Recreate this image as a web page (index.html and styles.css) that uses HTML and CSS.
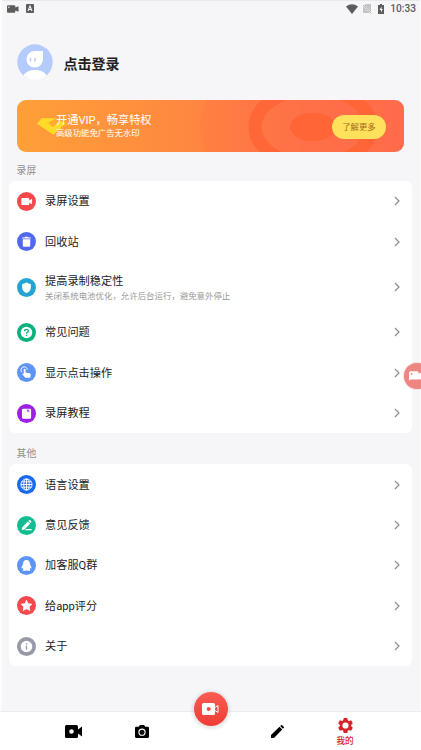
FILE: index.html
```
<!DOCTYPE html>
<html lang="zh-CN">
<head>
<meta charset="utf-8">
<title>我的</title>
<link rel="stylesheet" href="styles.css">
</head>
<body>
<svg class="defs" width="0" height="0">
  <symbol id="chev" viewBox="0 0 6 10"><path d="M1 1l4 4-4 4" fill="none" stroke="#8c8c8c" stroke-width="1.2"/></symbol>
</svg>
<div class="screen">
  <header class="status">
    <svg class="s-cam" viewBox="0 0 13 8"><path d="M1 0h7q1 0 1 1v1.500L12.500 1v6L9 5.500V7q0 1-1 1H1Q0 8 0 7V1q0-1 1-1z" fill="#5c5c5c"/><circle cx="2" cy="2" r=".8" fill="#f6f6f9"/></svg>
    <svg class="s-a" viewBox="0 0 8 9"><rect width="8" height="9" rx="1" fill="#5c5c5c"/><path d="M2 7l2-5 2 5M2.700 5.500h2.600" fill="none" stroke="#f6f6f9" stroke-width="1.100"/></svg>
    <span class="grow"></span>
    <svg class="s-wifi" viewBox="0 0 12 10"><path d="M0 2.500Q6-2 12 2.500L6 10z" fill="#5c5c5c"/></svg>
    <svg class="s-sim" viewBox="0 0 9 10"><path d="M3 0h5v8L1 1zM0 2l7 7H0z" fill="#c4c4c7"/><path d="M0 1l8.500 8.500" stroke="#aaa" stroke-width=".8"/></svg>
    <svg class="s-bat" viewBox="0 0 6 10"><path d="M2 0h2v1h2v9H0V1h2z" fill="#5c5c5c"/><path d="M3.500 2.500L1.500 6H3v2.500L4.700 5H3.500z" fill="#fff"/></svg>
    <span class="clock">10:33</span>
  </header>

  <section class="profile">
    <svg class="avatar" viewBox="0 0 36 36"><circle cx="18" cy="18" r="17.700" fill="#b3cbfd"/><path d="M18 7h8v8a8.300 8.300 0 1 1-8-8z" fill="#fff"/><path d="M6.500 31.500C8 28 13 26 18 26s10 2 11.500 5.500Q18 40.500 6.500 31.500z" fill="#fff"/><path d="M13.500 14v3.500M18 14v3.500" stroke="#b3cbfd" stroke-width="1.500"/></svg>
    <h1>点击登录</h1>
  </section>

  <section class="vip">
    <svg class="rings" viewBox="0 0 387 52"><ellipse cx="296" cy="27" rx="113" ry="76" fill="#ff6848" fill-opacity=".18"/><ellipse cx="296" cy="27" rx="58" ry="38" fill="none" stroke="#ff6130" stroke-width="13" stroke-opacity=".7"/><ellipse cx="296" cy="27" rx="23" ry="14" fill="#ff6535"/></svg>
    <svg class="gem" viewBox="0 0 35 20"><path d="M5 1h25l5 6-17 12L0 7z" fill="#ffba29" fill-opacity=".5"/><path d="M5 1h16l-9 5 5 4.500L27 4l3 3-12 12L0 7z" fill="#ffdc27"/></svg>
    <div class="vip-text"><div class="vip-title">开通VIP，畅享特权</div><div class="vip-sub">高级功能免广告无水印</div></div>
    <button class="more">了解更多</button>
  </section>

  <h2>录屏</h2>
  <section class="card">
    <div class="row"><svg class="ic" viewBox="0 0 24 24"><circle cx="12" cy="12" r="12" fill="#f7484c"/><path d="M7 7.500h7q1.500 0 1.500 1.500v1.700L19 8.500v7l-3.500-2V15q0 1.500-1.500 1.500H7Q5.500 16.500 5.500 15V9Q5.500 7.500 7 7.500z" fill="#fff"/></svg><div class="label">录屏设置</div><svg class="chev"><use href="#chev"/></svg></div>
    <div class="row"><svg class="ic" viewBox="0 0 24 24"><circle cx="12" cy="12" r="12" fill="#5069ee"/><path d="M6.500 6.800H9.500L10 6h4l.5.800h3v1.500h-11zM7.300 9h9.400v8q0 1.500-1.500 1.500H8.800Q7.300 18.500 7.300 17z" fill="#fff"/></svg><div class="label">回收站</div><svg class="chev"><use href="#chev"/></svg></div>
    <div class="row tall"><svg class="ic" viewBox="0 0 24 24"><circle cx="12" cy="12" r="12" fill="#24a4d5"/><path d="M12 5.500c2 1.600 3.500 1.800 5.500 2v4.500c0 3.500-2.500 5.800-5.500 7-3-1.200-5.500-3.500-5.500-7V7.500c2-.2 3.500-.4 5.500-2z" fill="#fff"/></svg><div class="label">提高录制稳定性<div class="note">关闭系统电池优化，允许后台运行，避免意外停止</div></div><svg class="chev"><use href="#chev"/></svg></div>
    <div class="row"><svg class="ic" viewBox="0 0 24 24"><circle cx="12" cy="12" r="12" fill="#0bb07f"/><circle cx="12" cy="12" r="7.300" fill="#fff"/><path d="M9.600 10.300q0-2.300 2.400-2.300t2.400 2.100c0 1.500-2.400 1.700-2.400 3.500M12 14.700v1.700" fill="none" stroke="#0bb07f" stroke-width="1.700"/></svg><div class="label">常见问题</div><svg class="chev"><use href="#chev"/></svg></div>
    <div class="row"><svg class="ic" viewBox="0 0 24 24"><circle cx="12" cy="12" r="12" fill="#5d94f5"/><path d="M6 11.500a4 4 0 1 1 7-3" fill="none" stroke="#fff" stroke-width="1.200"/><path d="M8.500 8q1.300-1.200 2.300 0v4l5.200 1q1.500.4 1.300 2l-.6 3.500H10.500L6.500 14q1-1.300 2 0z" fill="#fff"/></svg><div class="label">显示点击操作</div><svg class="chev"><use href="#chev"/></svg></div>
    <div class="row"><svg class="ic" viewBox="0 0 24 24"><circle cx="12" cy="12" r="12" fill="#9d20e5"/><rect x="6.300" y="6" width="11.500" height="12.500" rx="1.500" fill="#fff"/><path d="M12.500 7h3v3.500L14 9.500l-1.500 1z" fill="#9d20e5" fill-opacity=".7"/></svg><div class="label">录屏教程</div><svg class="chev"><use href="#chev"/></svg></div>
  </section>

  <h2 class="other">其他</h2>
  <section class="card">
    <div class="row"><svg class="ic" viewBox="0 0 24 24"><circle cx="12" cy="12" r="12" fill="#1769ed"/><g fill="none" stroke="#fff" stroke-width="1.200"><circle cx="12" cy="12" r="7"/><ellipse cx="12" cy="12" rx="3.500" ry="7"/><path d="M5 12h14M6 8.700h12M6 15.300h12M12 5v14"/></g></svg><div class="label">语言设置</div><svg class="chev"><use href="#chev"/></svg></div>
    <div class="row"><svg class="ic" viewBox="0 0 24 24"><circle cx="12" cy="12" r="12" fill="#13bd91"/><path d="M6.500 14.500l7-7.500 3 2.800-7 7.200-3.500.6zM14.300 6.200l1-.9q.8-.5 1.600.2l1 1q.7.800 0 1.600l-.8.800zM11.500 16.500h7V18h-8.500z" fill="#fff"/></svg><div class="label">意见反馈</div><svg class="chev"><use href="#chev"/></svg></div>
    <div class="row"><svg class="ic" viewBox="0 0 24 24"><circle cx="12" cy="12" r="12" fill="#5b93f6"/><path d="M12 5c3 0 4.300 2 4.300 4.500 0 1.500 2 3.500 2 5.500 0 1.200-.8 1-1.500.3l-.9 1.500q1.200.7.800 1.700H13L12 18l-1 .5H7.300q-.4-1 .8-1.700l-.9-1.500c-.7.700-1.500.900-1.500-.3 0-2 2-4 2-5.500C7.700 7 9 5 12 5z" fill="#fff"/></svg><div class="label">加客服Q群</div><svg class="chev"><use href="#chev"/></svg></div>
    <div class="row"><svg class="ic" viewBox="0 0 24 24"><circle cx="12" cy="12" r="12" fill="#f4494d"/><path d="M12 5.500l2 4.300 4.700.6-3.400 3.200.8 4.600-4.100-2.200-4.100 2.200.8-4.600-3.400-3.200 4.700-.6z" fill="#fff" stroke="#fff" stroke-linejoin="round"/></svg><div class="label">给app评分</div><svg class="chev"><use href="#chev"/></svg></div>
    <div class="row"><svg class="ic" viewBox="0 0 24 24"><circle cx="12" cy="12" r="12" fill="#9699a6"/><circle cx="12" cy="12" r="7.300" fill="#fff"/><path d="M12 8v1.500M12 10.700V16" stroke="#9699a6" stroke-width="1.600"/></svg><div class="label">关于</div><svg class="chev"><use href="#chev"/></svg></div>
  </section>

  <nav class="tabs">
    <div class="tab"><svg class="t-video" viewBox="0 0 17 13"><path fill-rule="evenodd" d="M1.500 0h10Q13 0 13 1.500v3L17 1.500v10L13 8.500v3q0 1.500-1.500 1.500h-10Q0 13 0 11.500v-10Q0 0 1.500 0zM6.500 4.200a2.300 2.300 0 1 0 0 4.600 2.300 2.300 0 0 0 0-4.600z"/></svg></div>
    <div class="tab"><svg class="t-photo" viewBox="0 0 14 13"><path d="M5 0h4l1.300 1.700H12.700Q14 1.700 14 3v8.500Q14 13 12.500 13h-11Q0 13 0 11.500V3q0-1.300 1.300-1.300h2.400z"/><circle cx="7" cy="7.200" r="3.100" fill="#111" stroke="#fff" stroke-width="1.100"/></svg></div>
    <div class="tab"></div>
    <div class="tab"><svg class="t-pen" viewBox="0 0 13 13"><path d="M0 13v-3L8.500 1.800l2.700 2.700L3 13zM9.200 1.100l.8-.8q.6-.6 1.200 0l1.500 1.500q.6.600 0 1.200l-.8.800z"/></svg></div>
    <div class="tab active"><svg class="t-gear" viewBox="0 0 16 16"><path fill-rule="evenodd" d="M6.200 0h3.600l.7 2.500 1 .6 2.500-.7 1.800 3.100L14 7.400v1.200l1.800 1.900-1.800 3.100-2.500-.7-1 .6-.7 2.500H6.200l-.7-2.500-1-.6-2.500.7-1.800-3.100L2 8.600V7.400L.2 5.500 2 2.400l2.500.7 1-.6zM8 4.700a3.300 3.300 0 1 0 0 6.600 3.300 3.300 0 0 0 0-6.600z" fill="#d82229"/></svg><span>我的</span></div>
    <div class="record"><svg viewBox="0 0 17 12"><path fill-rule="evenodd" d="M1.500 0h10Q13 0 13 1.500v9Q13 12 11.500 12h-10Q0 12 0 10.500v-9Q0 0 1.500 0zM6.700 4a2 2 0 1 0 0 4 2 2 0 0 0 0-4z" fill="#fff"/><path d="M13 4.500l3-2v7l-3-2" fill="none" stroke="#fff"/></svg></div>
  </nav>
</div>
<div class="floater"><svg viewBox="0 0 16 11"><path d="M2 0h7q2 0 2 2v1l5-2v9l-5-1v.5H2L0 11V2q0-2 2-2z" fill="#fff"/><circle cx="3" cy="3" r="1" fill="#e6817e"/></svg></div>
</body>
</html>
```
FILE: styles.css
```
* { box-sizing: border-box; }
body {
  margin: 0;
  width: 421px;
  height: 750px;
  overflow: hidden;
  position: relative;
  background: #fcfcfd;
  color: #222;
  font-family: Roboto, "Noto Sans CJK SC", sans-serif;
}
.defs { position: absolute; }
svg { display: block; flex: none; }
.screen {
  height: 750px;
  margin: 0 1px 0 2px;
  background: #f6f6f9;
  border-top: 1px solid #e9e9ed;
  display: flex;
  flex-direction: column;
}
.status { display: flex; align-items: center; height: 15px; padding: 0 4px 0 5px; }
.s-cam { width: 12px; height: 8px; margin-right: 7px; }
.s-a { width: 8px; height: 9px; }
.grow { flex: 1; }
.s-wifi { width: 12px; height: 10px; margin-right: 5px; }
.s-sim { width: 9px; height: 10px; margin-right: 6px; }
.s-bat { width: 6px; height: 10px; margin-right: 6px; }
.clock { font-size: 10.2px; line-height: 14px; color: #5c5c5c; font-weight: 500; }

.profile { display: flex; align-items: center; height: 36px; margin: 28px 0 0 15px; }
.avatar { width: 36px; height: 36px; margin-top: -1px; }
h1 { margin: 4px 0 0 10.5px; font-size: 14px; line-height: 20px; font-weight: 700; }

.vip {
  position: relative;
  flex: none;
  display: flex;
  align-items: center;
  height: 52px;
  width: 387px;
  margin: 20px 0 0 15px;
  border-radius: 9px;
  overflow: hidden;
  background: linear-gradient(90deg, #ffa038, #ff8740 45%, #ff7148 75%, #ff6d4b);
}
.rings { position: absolute; left: 0; top: 0; width: 387px; height: 52px; }
.gem { position: absolute; left: 20px; top: 17px; width: 32px; height: 19px; }
.vip-text { position: relative; margin-left: 39px; flex: 1; color: #fff; }
.vip-title { font-size: 11.2px; line-height: 15px; }
.vip-sub { font-size: 8.4px; line-height: 11.6px; }
.more {
  position: relative;
  width: 54px;
  height: 24px;
  margin: 2px 18px 0 0;
  padding: 0;
  border: 0;
  border-radius: 12px;
  background: #ffe15b;
  color: #a46a1e;
  font: 8.4px/24px Roboto, "Noto Sans CJK SC", sans-serif;
}
h2 { flex: none; margin: 10px 0 2px 14.6px; height: 17px; font-size: 9.8px; line-height: 17px; font-weight: 400; color: #8e8e93; }
h2.other { margin: 11.5px 0 2.5px 14.6px; }
.card { flex: none; width: 403.5px; margin-left: 6.500px; background: #fff; border-radius: 6px; }
.row { display: flex; align-items: center; height: 40.4px; padding: 0 12.5px 0 8px; }
.row.tall { height: 50.5px; }
.ic { width: 19px; height: 19px; margin-right: 9.5px; }
.label { flex: 1; font-size: 11.2px; line-height: 16px; padding-top: 2px; }
.note { font-size: 8.43px; line-height: 12px; color: #999; }
.chev { width: 6px; height: 10px; }

.tabs {
  position: relative;
  display: flex;
  height: 39px;
  margin: auto -1px 0 -2px;
  padding: 0 42px 0 40px;
  background: #fff;
  border-top: 1px solid #ececef;
}
.tab { flex: 1; display: flex; flex-direction: column; align-items: center; padding-top: 13px; }
.t-video { width: 17px; height: 13px; }
.t-photo { width: 14px; height: 13px; }
.t-pen { width: 13px; height: 13px; }
.tab.active { padding-top: 6px; color: #d82229; font-size: 8.6px; line-height: 12px; font-weight: 500; }
.t-gear { width: 15px; height: 15px; margin-bottom: 2px; }
.record {
  position: absolute;
  left: 193.500px;
  top: -20.5px;
  width: 34px;
  height: 34px;
  border-radius: 50%;
  display: flex;
  align-items: center;
  justify-content: center;
  background: linear-gradient(#fa5c52, #ee3c36);
  box-shadow: 0 1px 3px 2px rgba(120, 120, 130, .18);
}
.record svg { width: 17px; height: 12px; }
.floater {
  position: absolute;
  left: 404px;
  top: 362.5px;
  width: 26px;
  height: 26px;
  border-radius: 50%;
  background: #ed8580;
  box-shadow: 0 0 2px #f0a09c;
  display: flex;
  align-items: center;
  padding-left: 5px;
}
.floater svg { width: 14px; height: 10px; }
```
